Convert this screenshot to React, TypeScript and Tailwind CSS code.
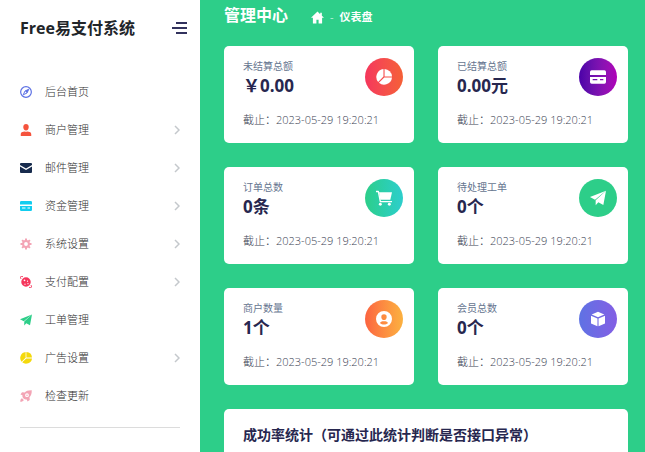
import type { ReactNode } from 'react'

type IconProps = { className?: string }

const Svg = ({ className, children }: IconProps & { children: ReactNode }) => (
  <svg viewBox="0 0 24 24" className={className} fill="currentColor" aria-hidden="true">
    {children}
  </svg>
)

const CompassIcon = ({ className }: IconProps) => (
  <Svg className={className}>
    <circle cx="12" cy="12" r="10.7" fill="none" stroke="currentColor" strokeWidth="2.4" />
    <path
      d="M17.5 6.5 14 14l-7.5 3.5L10 10z"
      fill="none"
      stroke="currentColor"
      strokeWidth="2"
      strokeLinejoin="round"
    />
    <path d="M17.5 6.5 14 14l-4-4z" />
  </Svg>
)

const UserIcon = ({ className }: IconProps) => (
  <Svg className={className}>
    <path d="M12 0c3.300 0 5.500 2.600 5.500 6S15.300 13 12 13 6.500 9.400 6.500 6 8.700 0 12 0z" />
    <path d="M1.500 24v-3.500c0-2.200 1.300-3.800 3.300-4.400l4.200-1.300c2 .9 4 .9 6 0l4.200 1.300c2 .6 3.300 2.200 3.300 4.400V24z" />
  </Svg>
)

const MailIcon = ({ className }: IconProps) => (
  <Svg className={className}>
    <path d="M0 4a2 2 0 0 1 2-2h20a2 2 0 0 1 2 2v2L12 13 0 6z" />
    <path d="M0 9l12 7 12-7v11a2 2 0 0 1-2 2H2a2 2 0 0 1-2-2z" />
  </Svg>
)

const CardIcon = ({ className }: IconProps) => (
  <Svg className={className}>
    <path d="M2.500 2h19A2.500 2.500 0 0 1 24 4.500V9H0V4.500A2.500 2.500 0 0 1 2.500 2z" />
    <path
      fillRule="evenodd"
      d="M0 12h24v7.500a2.500 2.500 0 0 1-2.500 2.500h-19A2.500 2.500 0 0 1 0 19.500zm4 3v2h7v-2zm11 0v2h5v-2z"
    />
  </Svg>
)

const GearIcon = ({ className }: IconProps) => (
  <Svg className={className}>
    <circle cx="12" cy="12" r="5.800" fill="none" stroke="currentColor" strokeWidth="4" />
    <path
      d="M12 1v5M12 18v5M1 12h5M18 12h5M4.200 4.200l3.600 3.600M16.200 16.200l3.600 3.600M19.800 4.200l-3.600 3.600M7.800 16.200l-3.600 3.600"
      stroke="currentColor"
      strokeWidth="4"
    />
  </Svg>
)

const PlanetIcon = ({ className }: IconProps) => (
  <Svg className={className}>
    <path
      fillRule="evenodd"
      d="M12 2.500a9.500 9.500 0 1 1 0 19 9.500 9.500 0 0 1 0-19zM9 7a1.700 1.700 0 1 0 0 3.400A1.700 1.700 0 0 0 9 7zm6 2a1.300 1.300 0 1 0 0 2.600A1.300 1.300 0 0 0 15 9zm-5 6a1.300 1.300 0 1 0 0 2.600 1.300 1.300 0 0 0 0-2.600zm6-1a1.300 1.300 0 1 0 0 2.600 1.300 1.300 0 0 0 0-2.600z"
    />
    <path
      d="M6 1.500C3.500.6 1.500.6 1 1.700c-.4.900 0 2.300 1 4M18 22.500c2.500.9 4.500.9 5-.2.400-.900 0-2.300-1-4"
      fill="none"
      stroke="currentColor"
      strokeWidth="2"
    />
  </Svg>
)

const SendIcon = ({ className }: IconProps) => (
  <Svg className={className}>
    <path d="M24 1 0 10.500l7.500 4z" />
    <path d="M24 1 8.500 15.200V23l4-4.500 7.500 4z" />
  </Svg>
)

const PieIcon = ({ className }: IconProps) => (
  <Svg className={className}>
    <path d="M11.200 0v11.300L3.200 19.500A12 12 0 0 1 11.200 0z" />
    <path d="M12.800 0A12 12 0 0 1 24 11.200H12.800z" />
    <path d="M24 12.800A12 12 0 0 1 4.400 20.700l8-7.900z" />
  </Svg>
)

const RocketIcon = ({ className }: IconProps) => (
  <Svg className={className}>
    <path
      fillRule="evenodd"
      d="M23.500.5C16 .3 12.500 2 9.500 5L4 4.500 1 9l4 1.500c-.5 1.500 0 4 1.500 6s4.500 2.500 7 2.500l1.500 4 4.500-3-.5-5.500c3-3 4.700-6.500 4.500-14zM14 6.500a3.800 3.800 0 1 1 0 7.600 3.800 3.800 0 0 1 0-7.600z"
    />
    <circle cx="14" cy="10.300" r="1.500" />
    <path d="M4 16.500c-2.500.5-3.500 3.500-3.500 7 3.500 0 6.500-1 7-3.500z" />
  </Svg>
)

const CartIcon = ({ className }: IconProps) => (
  <Svg className={className}>
    <path
      d="M0 2.200h3.500L6.500 17.500H24"
      fill="none"
      stroke="currentColor"
      strokeWidth="2"
      strokeLinejoin="round"
    />
    <path d="M4.500 3.500H24l-2.500 11H6.500z" />
    <circle cx="6.500" cy="21.500" r="2.200" />
    <circle cx="20" cy="21.500" r="2.200" />
  </Svg>
)

const ProfileIcon = ({ className }: IconProps) => (
  <Svg className={className}>
    <path
      fillRule="evenodd"
      d="M12 0a12 12 0 1 1 0 24 12 12 0 0 1 0-24zm0 5a4 4 0 0 0-4 4.200c0 2.300 1.700 4.300 4 4.300s4-2 4-4.300A4 4 0 0 0 12 5zm0 10.500c-3.500 0-5.800 1-5.800 2.700 1.600 1.400 3.600 2.200 5.800 2.200s4.200-.8 5.800-2.200c0-1.700-2.300-2.700-5.800-2.700z"
    />
  </Svg>
)

const BoxIcon = ({ className }: IconProps) => (
  <Svg className={className}>
    <path d="M12 1l9.500 4.200L12 9.500 2.500 5.200z" />
    <path d="M1.500 7l9.700 4.300V23l-9.700-4.300z" />
    <path d="M22.500 7l-9.700 4.300V23l9.700-4.300z" />
  </Svg>
)

const HomeIcon = ({ className }: IconProps) => (
  <Svg className={className}>
    <path d="M12 1 0 12.500h3.500V23H10v-7h4v7h6.500V12.500H24L20 8.700V3h-3v2.800z" />
  </Svg>
)

const ChevronIcon = ({ className }: IconProps) => (
  <svg viewBox="0 0 6 10" className={className} fill="none" stroke="currentColor" strokeWidth="1.500" aria-hidden="true">
    <path d="M1 1l4 4-4 4" />
  </svg>
)

const menu = [
  { label: '后台首页', Icon: CompassIcon, color: 'text-[#5e72e4]', sub: false },
  { label: '商户管理', Icon: UserIcon, color: 'text-[#f5533d]', sub: true },
  { label: '邮件管理', Icon: MailIcon, color: 'text-[#172b4d]', sub: true },
  { label: '资金管理', Icon: CardIcon, color: 'text-[#11cdef]', sub: true },
  { label: '系统设置', Icon: GearIcon, color: 'text-[#f3a4b5]', sub: true },
  { label: '支付配置', Icon: PlanetIcon, color: 'text-[#f5365c]', sub: true },
  { label: '工单管理', Icon: SendIcon, color: 'text-[#2dce89]', sub: false },
  { label: '广告设置', Icon: PieIcon, color: 'text-[#f4d90c]', sub: true },
  { label: '检查更新', Icon: RocketIcon, color: 'text-[#f3a4b5]', sub: false },
]

const stats = [
  { label: '未结算总额', value: '￥0.00', Icon: PieIcon, bg: 'from-[#f5365c] to-[#f56036]' },
  { label: '已结算总额', value: '0.00元', Icon: CardIcon, bg: 'from-[#4b00a8] to-[#b000b8]' },
  { label: '订单总数', value: '0条', Icon: CartIcon, bg: 'from-[#2dce89] to-[#2dcecc]' },
  { label: '待处理工单', value: '0个', Icon: SendIcon, bg: 'from-[#2dce89] to-[#2dce89]' },
  { label: '商户数量', value: '1个', Icon: ProfileIcon, bg: 'from-[#fb6340] to-[#fbb140]' },
  { label: '会员总数', value: '0个', Icon: BoxIcon, bg: 'from-[#5e72e4] to-[#825ee4]' },
]

const Sidebar = () => (
  <aside className="w-[200px] shrink-0 bg-white px-5">
    <div className="-mr-[7px] flex h-14 items-center justify-between">
      <span className="text-base font-bold text-[#212529]">Free易支付系统</span>
      <button type="button" aria-label="菜单" className="flex w-[15px] flex-col items-end gap-[3px]">
        <span className="h-[2px] w-[11px] bg-[#32325d]" />
        <span className="h-[2px] w-[15px] bg-[#32325d]" />
        <span className="h-[2px] w-[11px] bg-[#32325d]" />
      </button>
    </div>
    <nav className="mt-[17px]">
      <ul>
        {menu.map(({ label, Icon, color, sub }) => (
          <li key={label}>
            <a href="#" className="flex h-[38px] items-center text-[11px] font-light text-[#303030]">
              <Icon className={`mr-[13px] size-3 ${color}`} />
              {label}
              {sub && <ChevronIcon className="ml-auto h-[10px] w-[6px] text-[#c4c8cc]" />}
            </a>
          </li>
        ))}
      </ul>
    </nav>
    <hr className="mt-3 border-[#dcdcdc]" />
  </aside>
)

const App = () => {
  return (
    <div className="flex h-screen overflow-hidden bg-[#2dce89] font-['Open_Sans','Noto_Sans_CJK_SC',sans-serif]">
      <Sidebar />
      <main className="min-w-0 flex-1 pr-[17px] pl-6">
        <header className="flex h-[46px] items-start gap-[23px] pt-[3px] text-white">
          <h1 className="text-base leading-6 font-bold">管理中心</h1>
          <nav aria-label="面包屑" className="flex h-6 items-center gap-[6px] pt-1 text-[11px] font-semibold">
            <a href="#" aria-label="首页">
              <HomeIcon className="size-[13px]" />
            </a>
            <span className="font-normal text-white/70">-</span>
            <a href="#">仪表盘</a>
          </nav>
        </header>

        <div className="grid grid-cols-2 gap-6">
          {stats.map(({ label, value, Icon, bg }) => (
            <section key={label} className="h-[97px] rounded-[5px] bg-white pr-[11px] pl-[19px]">
              <div className="flex justify-between pt-3">
                <div>
                  <h2 className="text-[10px] leading-4 text-[#66758f]">{label}</h2>
                  <p className="text-[17px] leading-6 font-bold text-[#27274f]">{value}</p>
                </div>
                <div
                  className={`flex size-[38px] items-center justify-center rounded-full bg-linear-to-r text-white ${bg}`}
                >
                  <Icon className="size-4" />
                </div>
              </div>
              <p className="mt-[14px] text-[11px] leading-4 font-light text-[#3c4354]">截止：2023-05-29 19:20:21</p>
            </section>
          ))}
        </div>

        <section className="mt-6 h-60 rounded-[5px] bg-white px-[19px] pt-[14px]">
          <h2 className="text-sm leading-6 font-semibold text-[#27274f]">成功率统计（可通过此统计判断是否接口异常）</h2>
        </section>
      </main>
    </div>
  )
}

export default App
